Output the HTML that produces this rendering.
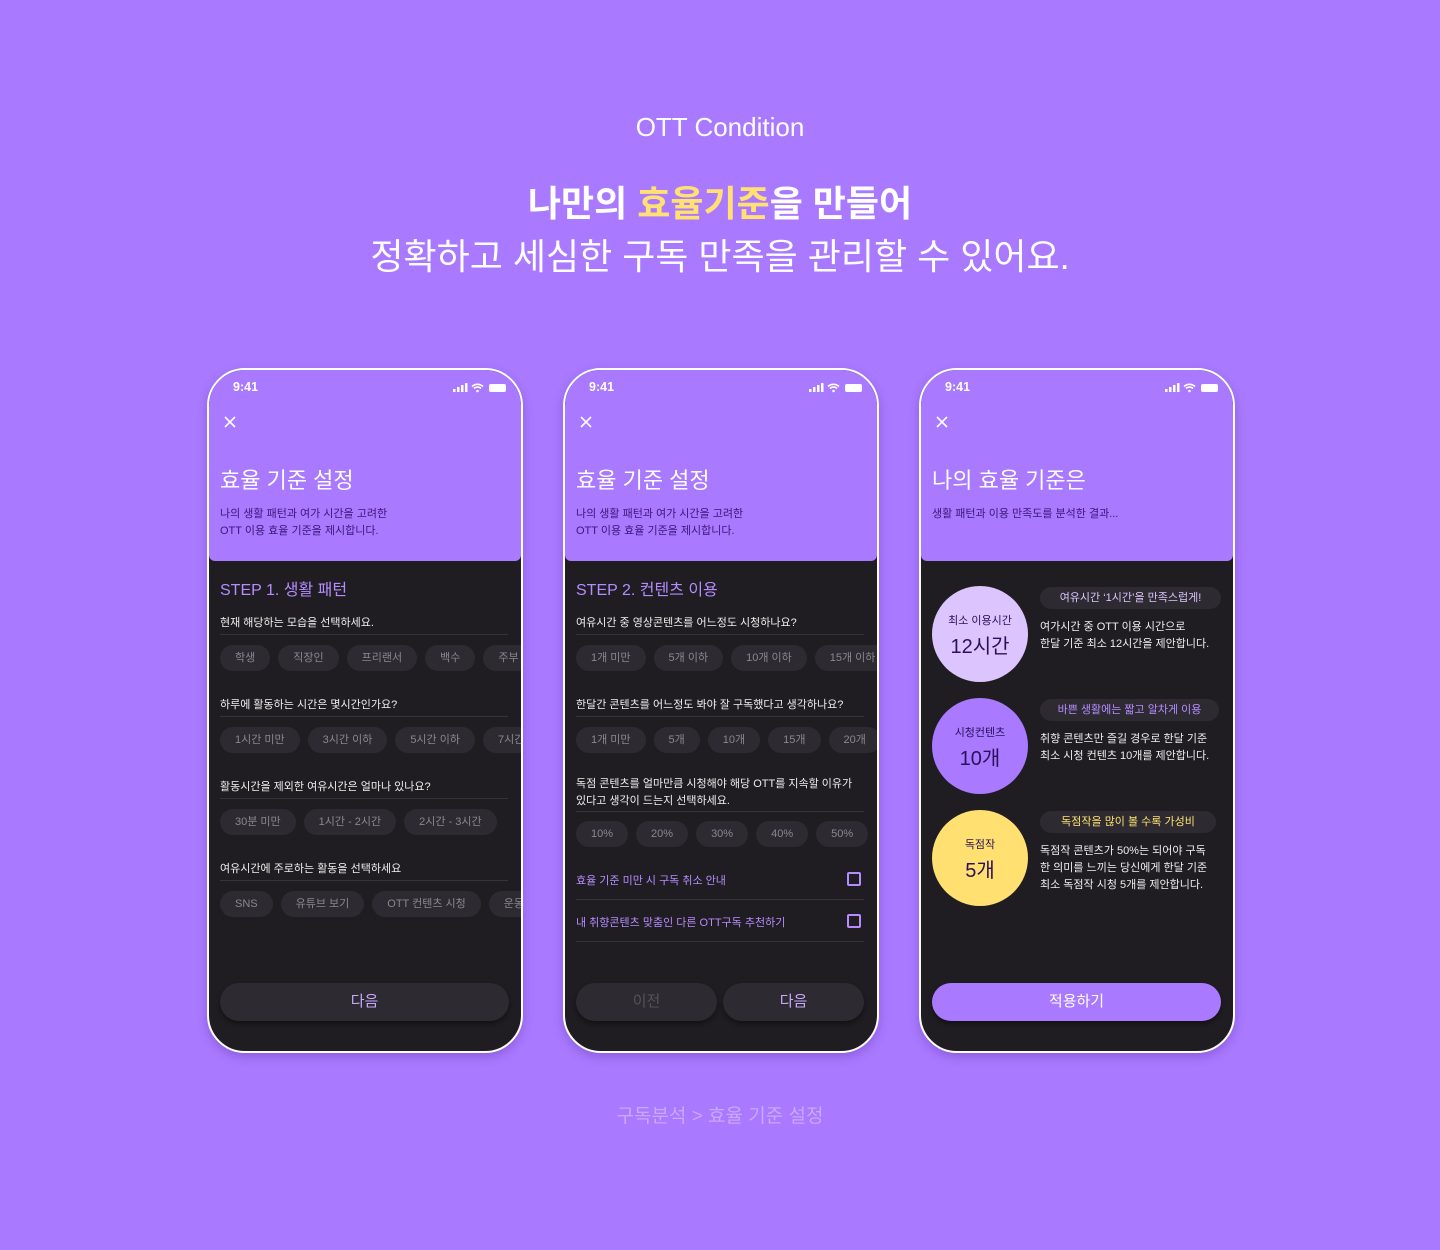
<!DOCTYPE html>
<html><head><meta charset="utf-8">
<style>
*{margin:0;padding:0;box-sizing:border-box}
body{width:1440px;height:1250px;background:#A979FF;font-family:"Liberation Sans","Noto Sans CJK KR",sans-serif;position:relative;overflow:hidden;color:#fff}
.a{position:absolute;white-space:nowrap}
.phone{position:absolute;top:368px;width:316px;height:685px;border:2px solid #fff;border-radius:38px;overflow:hidden;background:#1F1D21;box-shadow:0 4px 10px rgba(60,20,120,.25)}
.hdr{position:absolute;left:0;top:0;width:100%;height:191px;background:#A979FF;border-radius:0 0 6px 6px}
.time{left:24px;top:10px;font-size:12.5px;font-weight:bold}
.x{left:13px;top:44px}
.title{left:11px;top:93px;font-size:22px}
.sub{left:11px;top:136px;font-size:11px;line-height:17px;color:#3A1878}
.step{left:11px;top:206px;font-size:16px;color:#B58CFF}
.q{left:11px;font-size:11px;color:#eee;line-height:17px;margin-top:2px}
.ln{position:absolute;left:11px;width:288px;height:1px;background:#35323a}
.chips{position:absolute;left:11px;display:flex;gap:8px;white-space:nowrap}
.chip{height:26px;line-height:26px;padding:0 15px;border-radius:13px;background:#2D2B31;color:#8A8790;font-size:11px;flex:none}
.btn{position:absolute;top:613px;height:38px;border-radius:19px;background:#2D2B31;color:#C9A8FF;font-size:15px;text-align:center;line-height:38px;box-shadow:0 3px 5px rgba(0,0,0,.4)}
.chk{position:absolute;right:16px;width:14px;height:14px;border:2px solid #B58CFF;border-radius:2px}
.ck{left:11px;font-size:11px;color:#B58CFF}
.circ{position:absolute;left:11px;width:96px;height:96px;border-radius:50%;text-align:center;color:#2B1158}
.circ .l{font-size:11px;margin-top:26px}
.circ .v{font-size:20px;margin-top:2px}
.pill{position:absolute;left:119px;height:22px;line-height:22px;border-radius:11px;background:#2D2B31;font-size:11px;text-align:center}
.desc{left:119px;font-size:11px;line-height:17px;color:#eee}
</style></head><body>

<div class="a" style="left:0;width:1440px;text-align:center;top:112px;font-size:26px">OTT Condition</div>
<div class="a" style="left:0;width:1440px;text-align:center;top:175px;font-size:36px;font-weight:bold">나만의 <span style="color:#FFE071">효율기준</span>을 만들어</div>
<div class="a" style="left:0;width:1440px;text-align:center;top:228px;font-size:36px">정확하고 세심한 구독 만족을 관리할 수 있어요.</div>
<div class="a" style="left:0;width:1440px;text-align:center;top:1101px;font-size:19px;color:#C9A8FF">구독분석 &gt; 효율 기준 설정</div>

<div class="phone" style="left:207px">
 <div class="hdr"></div>
 <div class="a time">9:41</div>
 <svg class="a" style="left:244px;top:12px" width="56" height="12" viewBox="0 0 56 12"><rect x="0" y="7" width="2.5" height="3" fill="#fff"/><rect x="4" y="5" width="2.5" height="5" fill="#fff"/><rect x="8" y="3" width="2.5" height="7" fill="#fff"/><rect x="12" y="1" width="2.5" height="9" fill="#fff"/><path d="M19 4.5a8 8 0 0 1 11 0M21 6.5a5 5 0 0 1 7 0" stroke="#fff" stroke-width="1.6" fill="none"/><circle cx="24.5" cy="9" r="1.3" fill="#fff"/><rect x="36" y="2" width="17" height="8" rx="2" fill="#fff"/></svg>
 <svg class="a x" width="16" height="16" viewBox="0 0 16 16"><path d="M3 3L13 13M13 3L3 13" stroke="#fff" stroke-width="1.6"/></svg>
 <div class="a title">효율 기준 설정</div>
 <div class="a sub">나의 생활 패턴과 여가 시간을 고려한<br>OTT 이용 효율 기준을 제시합니다.</div>
 <div class="a step">STEP 1. 생활 패턴</div>
 <div class="a q" style="top:243px">현재 해당하는 모습을 선택하세요.</div><div class="ln" style="top:264px"></div>
 <div class="chips" style="top:275px"><span class="chip">학생</span><span class="chip">직장인</span><span class="chip">프리랜서</span><span class="chip">백수</span><span class="chip">주부</span></div>
 <div class="a q" style="top:325px">하루에 활동하는 시간은 몇시간인가요?</div><div class="ln" style="top:346px"></div>
 <div class="chips" style="top:357px"><span class="chip">1시간 미만</span><span class="chip">3시간 이하</span><span class="chip">5시간 이하</span><span class="chip">7시간 이하</span></div>
 <div class="a q" style="top:407px">활동시간을 제외한 여유시간은 얼마나 있나요?</div><div class="ln" style="top:428px"></div>
 <div class="chips" style="top:439px"><span class="chip">30분 미만</span><span class="chip">1시간 - 2시간</span><span class="chip">2시간 - 3시간</span></div>
 <div class="a q" style="top:489px">여유시간에 주로하는 활동을 선택하세요</div><div class="ln" style="top:510px"></div>
 <div class="chips" style="top:521px"><span class="chip">SNS</span><span class="chip">유튜브 보기</span><span class="chip">OTT 컨텐츠 시청</span><span class="chip">운동</span></div>
 <div class="btn" style="left:11px;width:289px">다음</div>
</div>

<div class="phone" style="left:563px">
 <div class="hdr"></div>
 <div class="a time">9:41</div>
 <svg class="a" style="left:244px;top:12px" width="56" height="12" viewBox="0 0 56 12"><rect x="0" y="7" width="2.5" height="3" fill="#fff"/><rect x="4" y="5" width="2.5" height="5" fill="#fff"/><rect x="8" y="3" width="2.5" height="7" fill="#fff"/><rect x="12" y="1" width="2.5" height="9" fill="#fff"/><path d="M19 4.5a8 8 0 0 1 11 0M21 6.5a5 5 0 0 1 7 0" stroke="#fff" stroke-width="1.6" fill="none"/><circle cx="24.5" cy="9" r="1.3" fill="#fff"/><rect x="36" y="2" width="17" height="8" rx="2" fill="#fff"/></svg>
 <svg class="a x" width="16" height="16" viewBox="0 0 16 16"><path d="M3 3L13 13M13 3L3 13" stroke="#fff" stroke-width="1.6"/></svg>
 <div class="a title">효율 기준 설정</div>
 <div class="a sub">나의 생활 패턴과 여가 시간을 고려한<br>OTT 이용 효율 기준을 제시합니다.</div>
 <div class="a step">STEP 2. 컨텐츠 이용</div>
 <div class="a q" style="top:243px">여유시간 중 영상콘텐츠를 어느정도 시청하나요?</div><div class="ln" style="top:264px"></div>
 <div class="chips" style="top:275px"><span class="chip">1개 미만</span><span class="chip">5개 이하</span><span class="chip">10개 이하</span><span class="chip">15개 이하</span></div>
 <div class="a q" style="top:325px">한달간 콘텐츠를 어느정도 봐야 잘 구독했다고 생각하나요?</div><div class="ln" style="top:346px"></div>
 <div class="chips" style="top:357px"><span class="chip">1개 미만</span><span class="chip">5개</span><span class="chip">10개</span><span class="chip">15개</span><span class="chip">20개</span></div>
 <div class="a q" style="top:404px">독점 콘텐츠를 얼마만큼 시청해야 해당 OTT를 지속할 이유가<br>있다고 생각이 드는지 선택하세요.</div><div class="ln" style="top:441px"></div>
 <div class="chips" style="top:451px"><span class="chip">10%</span><span class="chip">20%</span><span class="chip">30%</span><span class="chip">40%</span><span class="chip">50%</span></div>
 <div class="a ck" style="top:502px">효율 기준 미만 시 구독 취소 안내</div><div class="chk" style="top:502px"></div><div class="ln" style="top:529px"></div>
 <div class="a ck" style="top:544px">내 취향콘텐츠 맞춤인 다른 OTT구독 추천하기</div><div class="chk" style="top:544px"></div><div class="ln" style="top:571px"></div>
 <div class="btn" style="left:11px;width:141px;color:#555259">이전</div>
 <div class="btn" style="left:158px;width:141px">다음</div>
</div>

<div class="phone" style="left:919px">
 <div class="hdr"></div>
 <div class="a time">9:41</div>
 <svg class="a" style="left:244px;top:12px" width="56" height="12" viewBox="0 0 56 12"><rect x="0" y="7" width="2.5" height="3" fill="#fff"/><rect x="4" y="5" width="2.5" height="5" fill="#fff"/><rect x="8" y="3" width="2.5" height="7" fill="#fff"/><rect x="12" y="1" width="2.5" height="9" fill="#fff"/><path d="M19 4.5a8 8 0 0 1 11 0M21 6.5a5 5 0 0 1 7 0" stroke="#fff" stroke-width="1.6" fill="none"/><circle cx="24.5" cy="9" r="1.3" fill="#fff"/><rect x="36" y="2" width="17" height="8" rx="2" fill="#fff"/></svg>
 <svg class="a x" width="16" height="16" viewBox="0 0 16 16"><path d="M3 3L13 13M13 3L3 13" stroke="#fff" stroke-width="1.6"/></svg>
 <div class="a title">나의 효율 기준은</div>
 <div class="a sub">생활 패턴과 이용 만족도를 분석한 결과...</div>

 <div class="circ" style="top:216px;background:#DCC5FF"><div class="l">최소 이용시간</div><div class="v">12시간</div></div>
 <div class="pill" style="top:217px;width:181px;color:#DCC5FF">여유시간 ‘1시간’을 만족스럽게!</div>
 <div class="a desc" style="top:249px">여가시간 중 OTT 이용 시간으로<br>한달 기준 최소 12시간을 제안합니다.</div>

 <div class="circ" style="top:328px;background:#A979FF"><div class="l">시청컨텐츠</div><div class="v">10개</div></div>
 <div class="pill" style="top:329px;width:179px;color:#B58CFF">바쁜 생활에는 짧고 알차게 이용</div>
 <div class="a desc" style="top:361px">취향 콘텐츠만 즐길 경우로 한달 기준<br>최소 시청 컨텐츠 10개를 제안합니다.</div>

 <div class="circ" style="top:440px;background:#FFE071"><div class="l">독점작</div><div class="v">5개</div></div>
 <div class="pill" style="top:441px;width:176px;color:#FFE071">독점작을 많이 볼 수록 가성비</div>
 <div class="a desc" style="top:473px">독점작 콘텐츠가 50%는 되어야 구독<br>한 의미를 느끼는 당신에게 한달 기준<br>최소 독점작 시청 5개를 제안합니다.</div>

 <div class="btn" style="left:11px;width:289px;background:#A979FF;color:#fff">적용하기</div>
</div>
</body></html>
